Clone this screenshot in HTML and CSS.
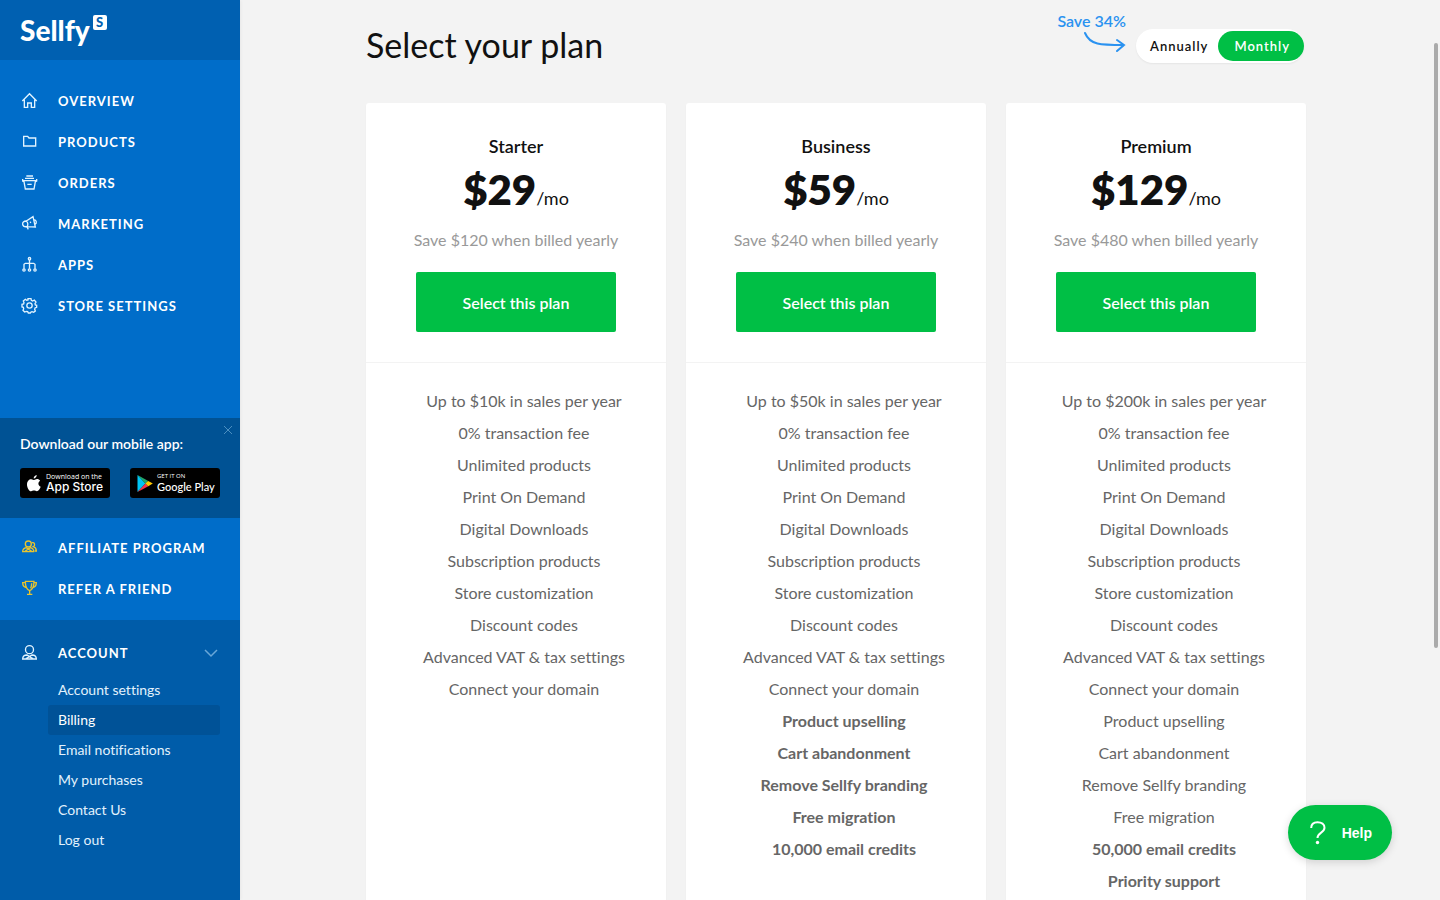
FILE: index.html
```html
<!DOCTYPE html>
<html lang="en">
<head>
<meta charset="utf-8">
<meta name="viewport" content="width=device-width, initial-scale=1">
<title>Sellfy – Select your plan</title>
<link rel="stylesheet" href="styles.css">
</head>
<body>
<div class="app">
  <aside class="sidebar">
    <a class="brand" href="#"><span class="brand-name">Sellfy</span><span class="brand-tag">S</span></a>
    <nav class="nav nav-main" aria-label="Main">
      <a class="nav-item" href="#"><svg class="icon" viewBox="0 0 45 45"><path d="M1 24 22.500 2 44 24M7 20v23h10V30h11v13h10V20"/></svg>Overview</a>
      <a class="nav-item" href="#"><svg class="icon" viewBox="0 0 45 45"><path d="M5 7h12l4 5h20v24H5z"/></svg>Products</a>
      <a class="nav-item" href="#"><svg class="icon" viewBox="0 0 45 45"><path d="M13 3h20M9 10h27M1 17h43M2 12v6l4 2 4 22h26l4-22 4-2v-6M16 28h13"/></svg>Orders</a>
      <a class="nav-item" href="#"><svg class="icon" viewBox="0 0 45 45"><path d="M13 15 33 2l7 31-25-1M13 15C5 15 1 19 2 25s5 8 13 7M13 15c5 4 6 12 2 17M36 11c7 1 10 10 3 14M15 33l4 7M25 17l1 4"/></svg>Marketing</a>
      <a class="nav-item" href="#"><svg class="icon" viewBox="0 0 45 45"><path d="M22.500 9v26M6 35V22l4-3h25l4 3v13"/><circle cx="22.500" cy="5" r="3.500"/><circle cx="6" cy="39" r="3.500"/><circle cx="22.500" cy="39" r="3.500"/><circle cx="39" cy="39" r="3.500"/></svg>Apps</a>
      <a class="nav-item" href="#"><svg class="icon" viewBox="0 0 45 45"><circle cx="22.500" cy="22.500" r="8"/><path d="M18 2h9l1 5 4 2 5-3 5 6-3 5 1 4 4 1v6l-5 2-1 4 2 5-5 4-5-2-3 1-2 3h-6l-2-4-4-1-5 2-5-5 2-5-1-4-4-1v-8l5-1 1-4-2-5 6-5 4 3 4-1z"/></svg>Store settings</a>
    </nav>
    <section class="promo">
      <button class="promo-close" type="button" aria-label="Close"><svg viewBox="0 0 10 10"><path d="m1 1 8 8M9 1 1 9"/></svg></button>
      <p class="promo-title">Download our mobile app:</p>
      <div class="stores">
        <a class="store store-apple" href="#">
          <svg class="store-logo" viewBox="0 0 14 17"><path fill="#fff" d="M9.700 0c.2 1.600-1.300 3.500-3 3.500C6.500 1.900 8.200.2 9.700 0zM10 4.100c1.300 0 2.400.6 3.100 1.600-2.500 1.500-2.100 5 .6 6-.7 2-2.200 4.500-3.800 4.600-1.200 0-1.500-.7-2.900-.7s-1.800.7-2.900.7C2.100 16.400 0 12.500 0 9.500c0-3.300 2-5.300 4.200-5.300 1.300 0 2.200.8 3 .8.700 0 1.600-.9 2.800-.9z"/></svg>
          <span class="store-text"><span class="store-small">Download on the</span><span class="store-big">App Store</span></span>
        </a>
        <a class="store store-google" href="#">
          <svg class="store-logo" viewBox="0 0 16 17"><path fill="#00c4f4" d="M.5 0v17l8-8.500z"/><path fill="#20a66a" d="M.5 0 11.300 6 8.500 8.700z"/><path fill="#f5334b" d="M.5 17 11.300 11.200 8.500 8.400z"/><path fill="#ffc900" d="m11.200 5.900 4.600 2.700-4.600 2.700-2.800-2.700z"/></svg>
          <span class="store-text"><span class="store-small">GET IT ON</span><span class="store-big">Google Play</span></span>
        </a>
      </div>
    </section>
    <nav class="nav nav-extra" aria-label="Rewards">
      <a class="nav-item" href="#"><svg class="icon icon-gold" viewBox="0 0 45 45"><circle cx="19" cy="12" r="9"/><path d="M2 35c0-8 6-11 11-12l6 4 6-4c5 1 10 4 10 12zM9 34l10-7 10 7M30 8c9-2 10 9 4 12 6 2 9 6 9 13h-5"/></svg>Affiliate program</a>
      <a class="nav-item" href="#"><svg class="icon icon-gold" viewBox="0 0 45 45"><path d="M10 1h26c0 17-3 25-13 28C13 26 10 18 10 1zM10 5H2c0 9 4 13 11 15M35 5h8c0 9-4 13-11 15M23 29v10M15 40h16M29 7c0 7-1 11-3 15"/></svg>Refer a friend</a>
    </nav>
    <section class="account">
      <button class="nav-item account-toggle" type="button" aria-expanded="true"><svg class="icon" viewBox="0 0 45 45"><circle cx="22.500" cy="14" r="12"/><path d="M2 42c0-8 6-12 13-12l7.500 5 7.500-5c7 0 13 4 13 12zM12 41l10-6 11 6"/></svg>Account<svg class="chevron" viewBox="0 0 14 8"><path d="m1 1 6 6 6-6"/></svg></button>
      <ul class="account-list">
        <li><a href="#">Account settings</a></li>
        <li><a class="is-active" href="#" aria-current="page">Billing</a></li>
        <li><a href="#">Email notifications</a></li>
        <li><a href="#">My purchases</a></li>
        <li><a href="#">Contact Us</a></li>
        <li><a href="#">Log out</a></li>
      </ul>
    </section>
  </aside>

  <main class="main">
    <div class="content">
      <header class="page-head">
        <h1>Select your plan</h1>
        <div class="billing">
          <div class="saving"><span>Save 34%</span><svg viewBox="0 0 42 19"><path d="M1 1c5 12 15 12 39 12M33 8l7 5-7 6"/></svg></div>
          <div class="switch">
            <button type="button">Annually</button>
            <button class="is-on" type="button" aria-pressed="true">Monthly</button>
          </div>
        </div>
      </header>
      <div class="plans">
        <article class="plan">
          <div class="plan-head">
            <h2>Starter</h2>
            <p class="price"><strong>$29</strong>/mo</p>
            <p class="note">Save $120 when billed yearly</p>
            <button class="select" type="button">Select this plan</button>
          </div>
          <ul class="features">
            <li>Up to $10k in sales per year</li>
            <li>0% transaction fee</li>
            <li>Unlimited products</li>
            <li>Print On Demand</li>
            <li>Digital Downloads</li>
            <li>Subscription products</li>
            <li>Store customization</li>
            <li>Discount codes</li>
            <li>Advanced VAT &amp; tax settings</li>
            <li>Connect your domain</li>
          </ul>
        </article>
        <article class="plan">
          <div class="plan-head">
            <h2>Business</h2>
            <p class="price"><strong>$59</strong>/mo</p>
            <p class="note">Save $240 when billed yearly</p>
            <button class="select" type="button">Select this plan</button>
          </div>
          <ul class="features">
            <li>Up to $50k in sales per year</li>
            <li>0% transaction fee</li>
            <li>Unlimited products</li>
            <li>Print On Demand</li>
            <li>Digital Downloads</li>
            <li>Subscription products</li>
            <li>Store customization</li>
            <li>Discount codes</li>
            <li>Advanced VAT &amp; tax settings</li>
            <li>Connect your domain</li>
            <li class="extra">Product upselling</li>
            <li class="extra">Cart abandonment</li>
            <li class="extra">Remove Sellfy branding</li>
            <li class="extra">Free migration</li>
            <li class="extra">10,000 email credits</li>
          </ul>
        </article>
        <article class="plan">
          <div class="plan-head">
            <h2>Premium</h2>
            <p class="price"><strong>$129</strong>/mo</p>
            <p class="note">Save $480 when billed yearly</p>
            <button class="select" type="button">Select this plan</button>
          </div>
          <ul class="features">
            <li>Up to $200k in sales per year</li>
            <li>0% transaction fee</li>
            <li>Unlimited products</li>
            <li>Print On Demand</li>
            <li>Digital Downloads</li>
            <li>Subscription products</li>
            <li>Store customization</li>
            <li>Discount codes</li>
            <li>Advanced VAT &amp; tax settings</li>
            <li>Connect your domain</li>
            <li>Product upselling</li>
            <li>Cart abandonment</li>
            <li>Remove Sellfy branding</li>
            <li>Free migration</li>
            <li class="extra">50,000 email credits</li>
            <li class="extra">Priority support</li>
          </ul>
        </article>
      </div>
    </div>
  </main>
  <div class="scroll-thumb"></div>
  <button class="help" type="button"><svg viewBox="0 0 16 24"><path d="M1.200 7C1.200 3 4 1.200 7.500 1.200c4 0 7 2 7 5.600 0 5-7 4.700-7 10.200"/><circle cx="7.500" cy="21.500" r="1.700"/></svg>Help</button>
</div>
</body>
</html>
```
FILE: styles.css
```css
* { box-sizing: border-box; }

body {
  margin: 0;
  font-family: Lato, "Open Sans", sans-serif;
  font-variant-ligatures: none;
  color: #111;
  background: #f3f3f3;
}

h1, h2, p, ul { margin: 0; padding: 0; }
ul { list-style: none; }
a { color: inherit; text-decoration: none; }
button { font-family: inherit; border: 0; cursor: pointer; }
svg { fill: none; flex: none; }

.app {
  position: relative;
  display: grid;
  grid-template-columns: 240px 1fr;
  height: 100vh;
  overflow: hidden;
}

/* Sidebar */
.sidebar {
  display: flex;
  flex-direction: column;
  min-height: 0;
  overflow: hidden;
  color: #fff;
  background: #006dc9;
  box-shadow: 0 0 4px rgba(0, 0, 0, .08);
}

.brand {
  display: flex;
  flex: none;
  gap: 3px;
  height: 60px;
  padding: 15px 20px 0;
  background: #0060b1;
}
.brand-name { font-size: 28px; font-weight: 900; line-height: 30px; }
.brand-tag {
  width: 14px;
  height: 15px;
  border-radius: 2px;
  background: #fff;
  color: #0060b1;
  font-size: 13px;
  font-weight: 900;
  line-height: 15px;
  text-align: center;
}

.nav-main { padding-top: 20px; }
.nav-extra { padding: 9px 0 11px; }
.nav-item {
  display: flex;
  align-items: center;
  gap: 21px;
  width: 100%;
  height: 41px;
  padding: 0 22px;
  color: #fff;
  font-size: 13px;
  font-weight: 700;
  letter-spacing: 1px;
  text-transform: uppercase;
}
.icon {
  width: 15px;
  height: 15px;
  stroke: #e2f4ff;
  stroke-width: 4;
  overflow: visible;
}
.icon-gold { stroke: #e8c42e; }

.promo {
  position: relative;
  height: 100px;
  margin-top: auto;
  padding: 16px 20px 20px;
  background: #005294;
}
.promo-title { font-size: 14px; font-weight: 600; line-height: 20px; }
.promo-close {
  position: absolute;
  top: 7px;
  right: 7px;
  padding: 0;
  width: 10px;
  height: 10px;
  background: none;
}
.promo-close svg { display: block; width: 10px; stroke: #4c8fc0; }
.stores { display: grid; grid-template-columns: 1fr 1fr; gap: 20px; margin-top: 14px; }
.store {
  display: flex;
  align-items: center;
  min-width: 0;
  gap: 5px;
  height: 30px;
  padding-left: 7px;
  border-radius: 3px;
  background: #000;
}
.store-logo { height: 17px; }
.store-google { gap: 4px; }
.store-text { display: flex; flex-direction: column; white-space: nowrap; }
.store-small { font: 500 6px/7px "Open Sans", sans-serif; }
.store-apple .store-small { font-size: 7px; }
.store-big { font: 500 12px/13px Inter, sans-serif; }
.store-google .store-big { font: 500 11px/13px Lato, sans-serif; }

.account { padding: 12px 0 45px; background: #005ca9; }
.account-toggle { background: none; text-align: left; }
.chevron { width: 14px; height: 8px; margin-left: auto; stroke: #69a7d8; stroke-width: 1.5; overflow: visible; }
.account-list { padding: 2px 20px 0 48px; }
.account-list a {
  display: block;
  padding: 0 10px;
  border-radius: 3px;
  color: #e2f2fd;
  font-size: 14px;
  line-height: 30px;
}
.account-list .is-active { background: #005297; color: #fff; }

/* Plans */
.main {
  min-width: 0;
  padding: 0 28px 0 20px;
  overflow-y: auto;
  scrollbar-width: none;
}
.content { max-width: 940px; margin: 0 auto; padding-bottom: 40px; }
.page-head {
  display: flex;
  justify-content: space-between;
  height: 103px;
  padding-right: 2px;
}
h1 { padding-top: 24px; font-size: 34px; font-weight: 400; line-height: 42px; }
.billing { display: flex; gap: 10px; }
.saving {
  display: flex;
  flex-direction: column;
  align-items: flex-end;
  padding-top: 10px;
  color: #2a92f0;
  font-size: 16px;
  font-weight: 600;
  line-height: 22px;
}
.saving svg { width: 42px; height: 19px; stroke: #2a92f0; stroke-width: 2; stroke-linecap: round; overflow: visible; }
.switch {
  display: flex;
  align-items: center;
  height: 34px;
  margin-top: 29px;
  border-radius: 17px;
  background: #fff;
  box-shadow: 0 1px 2px rgba(0, 0, 0, .06);
}
.switch button {
  height: 30px;
  padding: 0 10px 0 14px;
  border-radius: 15px;
  background: none;
  color: #111;
  font-size: 13px;
  font-weight: 600;
  letter-spacing: 1px;
}
.switch .is-on { padding: 0 14px 0 16px; background: #00bf45; color: #fff; }

.plans { display: grid; grid-template-columns: repeat(3, 1fr); gap: 20px; }
.plan {
  border-radius: 3px;
  background: #fff;
  box-shadow: 0 1px 2px rgba(0, 0, 0, .04);
  text-align: center;
}
.plan-head { padding: 32px 20px 30px; border-bottom: 1px solid #f3f3f3; }
h2 { font-size: 18px; font-weight: 600; line-height: 22px; }
.price { padding-top: 7px; font-size: 18px; line-height: 50px; }
.price strong { font-size: 42px; font-weight: 800; }
.note { padding-top: 6px; color: #999; font-size: 16px; line-height: 22px; }
.select {
  width: 200px;
  height: 60px;
  margin-top: 21px;
  border-radius: 2px;
  background: #00bf45;
  color: #fff;
  font-size: 16px;
  font-weight: 600;
}
.features { padding: 22px 0 40px 16px; color: #666; font-size: 16px; line-height: 32px; }
.extra { font-weight: 700; }

.scroll-thumb {
  position: absolute;
  top: 43px;
  right: 2px;
  width: 4px;
  height: 605px;
  border-radius: 2px;
  background: #aaa;
}
.help {
  position: absolute;
  right: 48px;
  bottom: 40px;
  display: flex;
  align-items: center;
  gap: 16px;
  height: 55px;
  padding: 0 20px 0 22px;
  border-radius: 28px;
  background: #00bf45;
  color: #fff;
  box-shadow: 0 2px 8px rgba(0, 0, 0, .15);
  font: 700 14px/20px "Liberation Sans", sans-serif;
}
.help svg { width: 16px; height: 24px; stroke: #fff; stroke-width: 2; }
.help circle { fill: #fff; stroke: none; }
```
